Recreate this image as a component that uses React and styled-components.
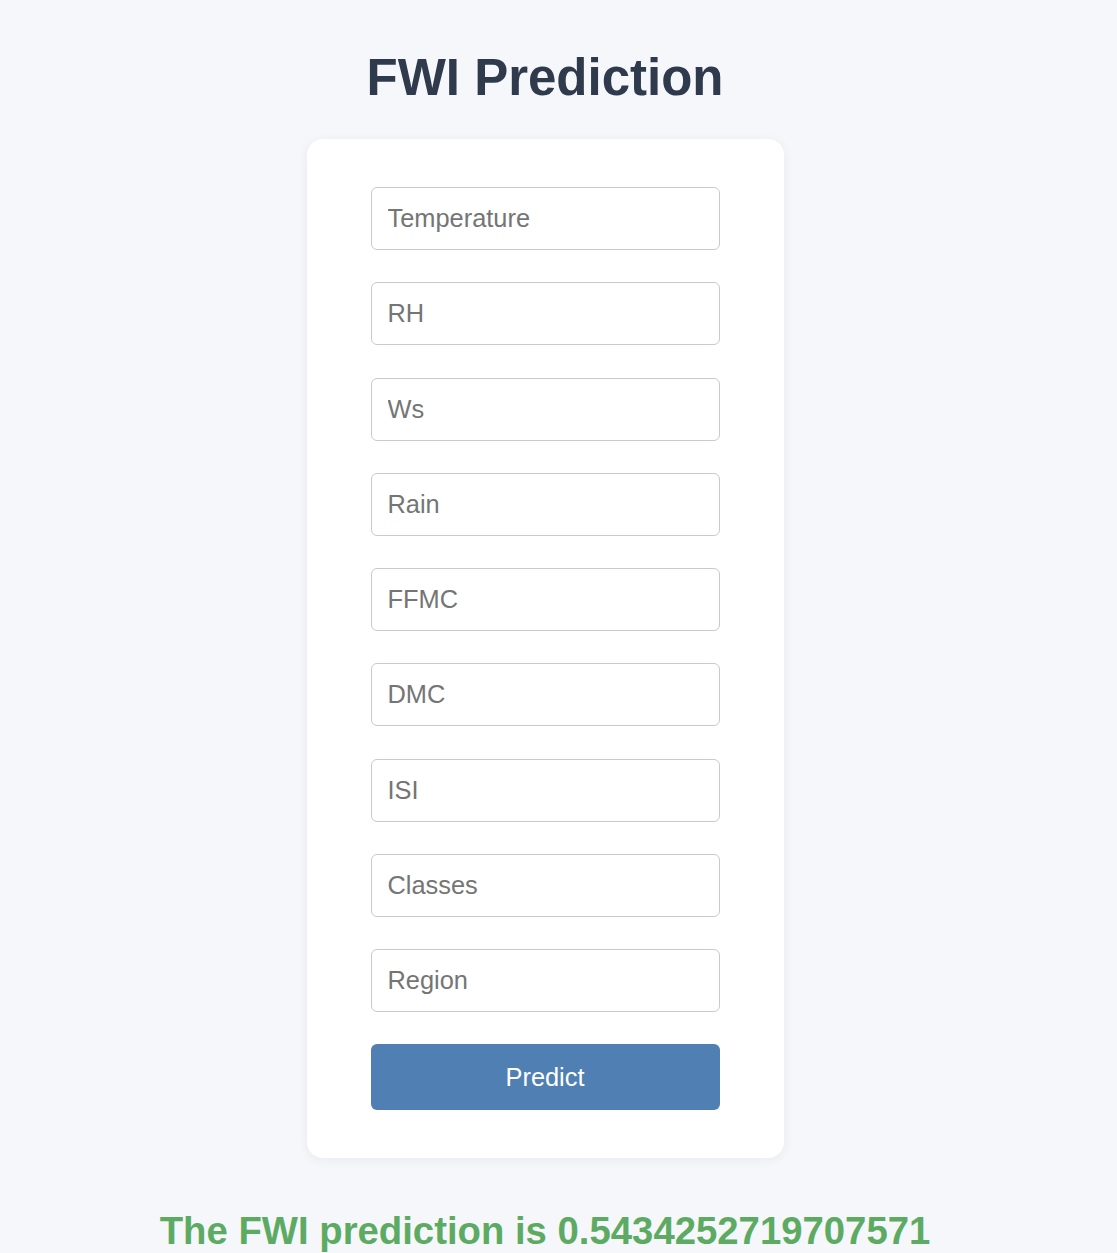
import React, { useState } from 'react';
import styled, { createGlobalStyle } from 'styled-components';

const GlobalStyle = createGlobalStyle`
    body {
        margin: 0;
        background: #f5f7fa;
        font-family: "Liberation Sans", Arial, sans-serif;
    }
`
const Page = styled.div`
    display: flex;
    flex-direction: column;
    align-items: center;
    padding: 48px 27px 0 0;
`
const Title = styled.h1`
    margin: 0 0 32px;
    font-size: 51px;
    font-weight: 700;
    color: #2f3b4c;
    line-height: normal;
`
const Card = styled.form`
    box-sizing: border-box;
    width: 477px;
    padding: 48px 64px;
    background: #fff;
    border-radius: 16px;
    box-shadow: 0 2px 12px rgba(30, 40, 70, 0.06);
    display: flex;
    flex-direction: column;
    gap: 32.25px;
`
const Field = styled.input`
    box-sizing: border-box;
    height: 63px;
    padding: 0 16px;
    border: 1px solid #c9c9d1;
    border-radius: 6px;
    font-family: inherit;
    font-size: 25.4px;
    color: #333;
    outline: none;
    &::placeholder {
        color: #757575;
    }
`
const Button = styled.button`
    height: 66px;
    border: none;
    border-radius: 6px;
    background: #4f7fb3;
    color: #fff;
    font-family: inherit;
    font-size: 25.4px;
    cursor: pointer;
`
const Result = styled.h2`
    margin: 51px 0 0;
    font-size: 38.3px;
    font-weight: 700;
    color: #5dab63;
    line-height: normal;
`

const fields = ['Temperature', 'RH', 'Ws', 'Rain', 'FFMC', 'DMC', 'ISI', 'Classes', 'Region']

export default function App() {
    const [values, setValues] = useState({})

    return (
        <Page>
            <GlobalStyle />
            <Title>FWI Prediction</Title>
            <Card onSubmit={e => e.preventDefault()}>
                {fields.map(name => (
                    <Field
                        key={name}
                        name={name}
                        placeholder={name}
                        value={values[name] || ''}
                        onChange={e => setValues({ ...values, [name]: e.target.value })}
                    />
                ))}
                <Button type="submit">Predict</Button>
            </Card>
            <Result>The FWI prediction is 0.5434252719707571</Result>
        </Page>
    );
}
